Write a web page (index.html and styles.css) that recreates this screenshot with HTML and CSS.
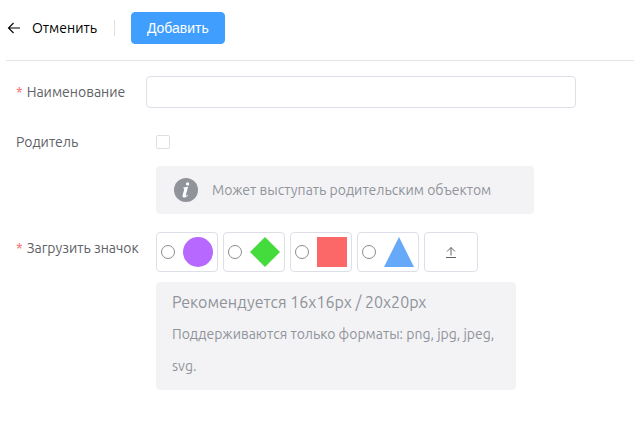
FILE: index.html
```html
<!doctype html>
<html lang="ru">
<head>
    <meta charset="UTF-8">
    <title>Добавить объект</title>
    <link rel="stylesheet" href="styles.css">
</head>
<body>
    <header class="page-header">
        <button type="button" class="back">
            <svg width="14" height="14" viewBox="0 0 14 14" fill="none" stroke="currentColor" stroke-width="1.1">
                <path d="M13 7H2M6.500 2L1.500 7l5 5"/>
            </svg>
            Отменить
        </button>
        <span class="divider"></span>
        <button type="submit" form="object-form" class="primary">Добавить</button>
    </header>
    <form id="object-form" class="form">
        <div class="row name-row">
            <label class="label required" for="name">Наименование</label>
            <input type="text" class="text-input" id="name" name="name">
        </div>
        <div class="row parent-row">
            <label class="label" for="parent">Родитель</label>
            <div class="content">
                <div class="check-line">
                    <input type="checkbox" class="checkbox" id="parent" name="parent">
                </div>
                <div class="alert info">
                    <svg width="24" height="24" viewBox="0 0 24 24">
                        <circle cx="12" cy="12" r="12" fill="#909399"/>
                        <circle cx="13.6" cy="5.9" r="1.7" fill="#fff"/>
                        <path d="M9.300 9.400l4.800-.6-2.300 8.400c-.2.900.4.800 1.800-.5l.4.500c-1.500 1.900-2.900 2.500-4.100 2.400-1.300-.1-1.600-1-1.300-2.300l1.600-5.800c.2-.9 0-1.300-1.100-1.300z" fill="#fff"/>
                    </svg>
                    <span>Может выступать родительским объектом</span>
                </div>
            </div>
        </div>
        <div class="row icon-row">
            <span class="label required" id="icon-label">Загрузить значок</span>
            <div class="content">
                <div class="icons" role="radiogroup" aria-labelledby="icon-label">
                    <label class="icon-card">
                        <input type="radio" class="radio" name="icon" value="circle" aria-label="Круг">
                        <svg width="30" height="30" viewBox="0 0 30 30"><circle cx="15" cy="15" r="15" fill="#b668ff"/></svg>
                    </label>
                    <label class="icon-card">
                        <input type="radio" class="radio" name="icon" value="diamond" aria-label="Ромб">
                        <svg width="30" height="30" viewBox="0 0 30 30"><path d="M15 0l15 15-15 15L0 15z" fill="#43dc3c"/></svg>
                    </label>
                    <label class="icon-card">
                        <input type="radio" class="radio" name="icon" value="square" aria-label="Квадрат">
                        <svg width="30" height="30" viewBox="0 0 30 30"><path d="M0 0h30v30H0z" fill="#fc6767"/></svg>
                    </label>
                    <label class="icon-card">
                        <input type="radio" class="radio" name="icon" value="triangle" aria-label="Треугольник">
                        <svg width="30" height="30" viewBox="0 0 30 30"><path d="M15 0l15 30H0z" fill="#65a9f8"/></svg>
                    </label>
                    <button type="button" class="upload" aria-label="Загрузить">
                        <svg width="12" height="12" viewBox="0 0 12 12" fill="none" stroke="currentColor">
                            <path d="M1 11.500h10M6 9.500V1.500M2 5.500l4-4 4 4"/>
                        </svg>
                    </button>
                </div>
                <div class="alert formats">
                    <p class="alert-title">Рекомендуется 16x16px / 20x20px</p>
                    <p class="alert-text">Поддерживаются только форматы: png, jpg, jpeg, svg.</p>
                </div>
            </div>
        </div>
    </form>
</body>
</html>
```
FILE: styles.css
```css
*{
    box-sizing: border-box;
}
body{
    margin: 0;
    font-family: Ubuntu, "Noto Sans", sans-serif;
    font-size: 14px;
    color: #606266;
    background: #ffffff;
}
button{
    font: inherit;
    cursor: pointer;
}
svg{
    display: block;
    flex: none;
}
.page-header{
    display: flex;
    align-items: center;
    margin-left: 6px;
    padding: 12px 0 16px;
    border-bottom: 1px solid #e4e4e6;
}
.back{
    display: flex;
    align-items: center;
    gap: 11px;
    padding: 0 0 0 1px;
    border: none;
    background: none;
    color: #000000;
}
.divider{
    width: 1px;
    height: 16px;
    margin: 0 16px 0 17px;
    background: #dcdfe6;
}
.primary{
    height: 32px;
    padding: 0 15px;
    border: 1px solid #409eff;
    border-radius: 4px;
    background: #409eff;
    color: #ffffff;
    font-family: "Liberation Sans", Arial, sans-serif;
}
.form{
    padding: 15px 16px;
}
.row{
    display: flex;
    margin-bottom: 18px;
}
.label{
    flex: none;
    width: 140px;
    line-height: 32px;
    white-space: nowrap;
}
.required::before{
    content: "*";
    margin-right: 4px;
    color: #f56c6c;
}
.name-row .label{
    width: 130px;
}
.content{
    flex: 1;
    min-width: 0;
}
.text-input{
    flex: 1;
    min-width: 0;
    max-width: 430px;
    height: 32px;
    padding: 0 11px;
    border: 1px solid #dcdfe6;
    border-radius: 4px;
    outline: none;
    font: inherit;
}
.check-line{
    display: flex;
    align-items: center;
    height: 32px;
    margin-bottom: 8px;
}
.checkbox{
    appearance: none;
    width: 14px;
    height: 14px;
    margin: 0;
    border: 1px solid #dcdfe6;
    border-radius: 2px;
}
.checkbox:checked{
    border-color: #409eff;
    background: #409eff;
}
.alert{
    border-radius: 4px;
    background: #f3f3f6;
    color: #909399;
}
.info{
    display: flex;
    align-items: center;
    gap: 14px;
    max-width: 378px;
    min-height: 48px;
    padding: 8px 18px;
    white-space: nowrap;
}
.icons{
    display: flex;
    flex-wrap: wrap;
    gap: 5px;
    margin-bottom: 10px;
}
.icon-card{
    display: flex;
    align-items: center;
    gap: 8px;
    width: 62px;
    height: 40px;
    padding: 0 4px;
    border: 1px solid #dcdfe6;
    border-radius: 4px;
}
.radio{
    appearance: none;
    flex: none;
    width: 14px;
    height: 14px;
    margin: 0;
    border: 1px solid #8c8c8c;
    border-radius: 50%;
}
.radio:checked{
    border: 4px solid #409eff;
}
.upload{
    display: flex;
    align-items: center;
    justify-content: center;
    width: 54px;
    height: 40px;
    padding: 0;
    border: 1px solid #dcdfe6;
    border-radius: 4px;
    background: #ffffff;
    color: #606266;
}
.formats{
    max-width: 360px;
    padding: 8px 16px;
}
.alert-title{
    margin: 0 0 4px;
    font-size: 16px;
    line-height: 24px;
}
.alert-text{
    margin: 0;
    line-height: 32px;
}
```
